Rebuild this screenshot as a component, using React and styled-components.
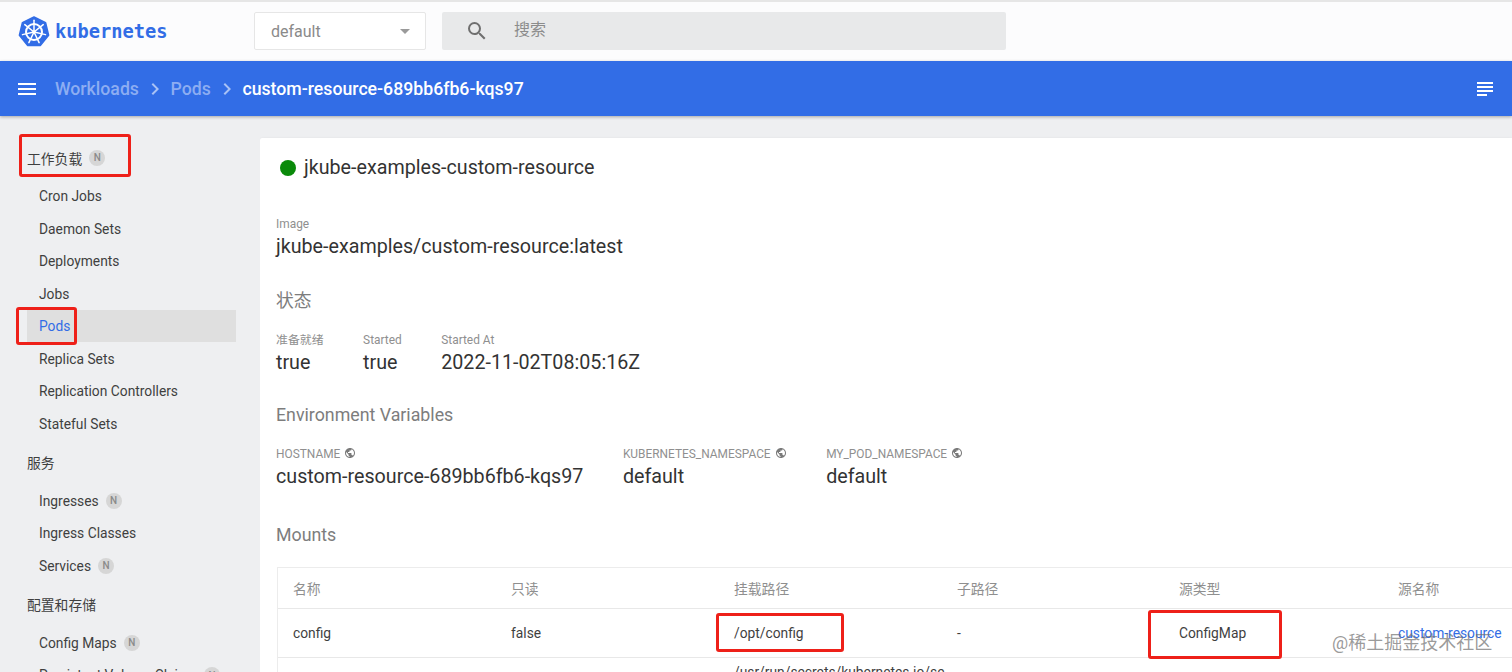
import React from "react";
import styled, { createGlobalStyle } from "styled-components";

const FONT = `Roboto, "Noto Sans CJK SC", sans-serif`;

const Global = createGlobalStyle`
  html, body { margin: 0; padding: 0; height: 100%; overflow: hidden; background: #eeeff1; }
  body { font-family: ${FONT}; color: #212121; }
  * { box-sizing: border-box; }
`;

const Page = styled.div`
  position: relative; width: 1512px; height: 672px; overflow: hidden;
  display: flex; flex-direction: column;
`;
const TopBar = styled.header`
  height: 61px; flex: none; background: #fcfcfd; border-top: 2px solid #e6e6e6;
  display: flex; align-items: center; padding: 0 0 0 18px;
`;
const Logo = styled.div`
  width: 236px; display: flex; align-items: center; gap: 5px; flex: none;
`;
const LogoText = styled.span`
  font-family: "DejaVu Sans Mono", monospace; font-weight: 700; font-size: 18.7px;
  color: #326de6; letter-spacing: 0;
`;
const NsSelect = styled.div`
  width: 172px; height: 38px; background: #fff; border: 1px solid #e6e6e6; border-radius: 2px;
  display: flex; align-items: center; justify-content: space-between; padding: 2px 15px 0 16px;
  font-size: 16px; color: #8a8a8a; margin-top: -2px;
`;
const Caret = styled.span`
  width: 0; height: 0; border-left: 5px solid transparent; border-right: 5px solid transparent;
  border-top: 5px solid #9a9a9a;
`;
const Search = styled.div`
  width: 564px; height: 38px; margin-left: 16px; margin-top: -2px; background: #e8e9ea; border-radius: 2px;
  display: flex; align-items: center; padding: 0 0 0 23px; gap: 25px;
  font-size: 16px; color: #8c8c8c;
`;
const SearchText = styled.span`
  line-height: 24px; margin-top: -2px;
`;
const BlueBar = styled.div`
  height: 55px; flex: none; background: #326de6; box-shadow: 0 1px 3px rgba(0,0,0,.3);
  display: flex; align-items: center; padding: 0 15px 0 15px; position: relative; z-index: 2;
`;
const Crumbs = styled.nav`
  display: flex; align-items: center; margin-left: 16px; flex: 1;
  font-size: 17.7px; font-weight: 500;
`;
const Crumb = styled.span`
  color: ${(p) => (p.$current ? "#fff" : "#8dadf2")};
`;
const Sep = styled.svg`
  width: 24px; height: 24px; margin: 0 3.8px; fill: #a9c2f5;
`;
const Body = styled.div`
  flex: 1; display: flex; min-height: 0;
`;
const Sidebar = styled.aside`
  width: 260px; flex: none; padding-top: 19.25px; overflow: hidden; font-size: 13.8px;
`;
const GroupTitle = styled.div`
  height: 44.5px; padding-left: 27px; display: flex; align-items: center;
  color: #3f3f3f;
`;
const Item = styled.div`
  height: 32.5px; margin: 0 24px 0 27px; padding-left: 12px; display: flex; align-items: center;
  color: ${(p) => (p.$active ? "#326de6" : "#3f3f3f")};
  background: ${(p) => (p.$active ? "#dfdfdf" : "transparent")};
  white-space: nowrap;
`;
const Badge = styled.span`
  width: 16px; height: 16px; border-radius: 50%; background: #d6d6d6; color: #8a8a8a;
  font-size: 10px; font-weight: 500; display: inline-flex; align-items: center; justify-content: center;
  margin-left: 7px; flex: none;
`;
const Main = styled.main`
  flex: 1; min-width: 0; padding-top: 22px; overflow: hidden;
`;
const Card = styled.section`
  height: 100%; background: #fff; border-radius: 2px 0 0 0; padding: 0 0 0 16px;
  box-shadow: 0 1px 3px rgba(0,0,0,.14); overflow: hidden;
`;
const TitleRow = styled.div`
  height: 78px; padding: 17px 0 0 4px; display: flex; align-items: flex-start; gap: 8px;
  font-size: 19.7px; line-height: 26px; color: #333;
`;
const Dot = styled.span`
  width: 16px; height: 16px; border-radius: 50%; background: #0a8a0a; margin-top: 5px; flex: none;
`;
const Label = styled.div`
  font-size: 11.9px; line-height: 16px; color: #8f8f8f; display: flex; align-items: center; gap: 4px;
`;
const Value = styled.div`
  font-size: 19.7px; line-height: 24px; color: #333; margin-top: 3px; white-space: nowrap;
`;
const SectionTitle = styled.h2`
  margin: ${(p) => p.$top}px 0 0; font-size: 17.8px; line-height: 24px; font-weight: 400; color: #7d7d7d;
`;
const Fields = styled.div`
  display: flex; gap: 39.5px; margin-top: 19px;
`;
const Globe = styled.svg`
  width: 12px; height: 12px; fill: #7a7a7a; margin-top: -2px;
`;
const Table = styled.div`
  margin: 20px 0 0 1px; width: 1300px; border: 1px solid #ececec; border-right: none; border-bottom: none;
`;
const Row = styled.div`
  display: grid; grid-template-columns: 218px 223px 223px 222px 219px 195px;
  height: ${(p) => p.$h}px; border-bottom: 1px solid #e8e8e8;
  align-items: ${(p) => (p.$top ? "flex-start" : "center")};
`;
const Cell = styled.div`
  padding-left: 15px; font-size: 13.8px; white-space: nowrap;
  color: ${(p) => (p.$head ? "#8f8f8f" : p.$link ? "#326de6" : "#3f3f3f")};
  padding-top: ${(p) => (p.$pad ? "6px" : "0")};
`;
const Annotation = styled.div`
  position: absolute; left: ${(p) => p.$x}px; top: ${(p) => p.$y}px;
  width: ${(p) => p.$w}px; height: ${(p) => p.$h}px;
  border: 3px solid #ee2019; border-radius: 3px; z-index: 5;
`;
const Watermark = styled.div`
  position: absolute; left: 1332px; top: 632px; font-size: 18px; line-height: 22px;
  color: rgba(110,110,110,.7); z-index: 6; white-space: nowrap;
`;

const Menu = () => (
  <svg width="24" height="24" viewBox="0 0 24 24" fill="#fff">
    <path d="M3 18h18v-2H3v2zm0-5h18v-2H3v2zm0-7v2h18V6H3z" />
  </svg>
);
const Notes = () => (
  <svg width="24" height="24" viewBox="0 0 24 24" fill="#fff">
    <path d="M14 17H4v2h10v-2zm6-8H4v2h16V9zM4 15h16v-2H4v2zM4 5v2h16V5H4z" />
  </svg>
);
const Chevron = () => (
  <Sep viewBox="0 0 24 24">
    <path d="M10 6L8.59 7.41 13.17 12l-4.58 4.59L10 18l6-6z" />
  </Sep>
);
const SearchIcon = () => (
  <svg width="24" height="24" viewBox="0 0 24 24" fill="#6f6f6f">
    <path d="M15.5 14h-.79l-.28-.27A6.47 6.47 0 0 0 16 9.5 6.5 6.5 0 1 0 9.5 16c1.61 0 3.09-.59 4.23-1.57l.27.28v.79l5 4.99L20.49 19l-4.99-5zm-6 0C7.01 14 5 11.99 5 9.5S7.01 5 9.5 5 14 7.01 14 9.5 11.99 14 9.5 14z" />
  </svg>
);
const PublicIcon = () => (
  <Globe viewBox="0 0 24 24">
    <path d="M12 2C6.48 2 2 6.48 2 12s4.48 10 10 10 10-4.48 10-10S17.52 2 12 2zm-1 17.93c-3.95-.49-7-3.85-7-7.93 0-.62.08-1.21.21-1.79L9 15v1c0 1.1.9 2 2 2v1.93zm6.9-2.54c-.26-.81-1-1.39-1.9-1.39h-1v-3c0-.55-.45-1-1-1H8v-2h2c.55 0 1-.45 1-1V7h2c1.1 0 2-.9 2-2v-.41c2.93 1.19 5 4.06 5 7.41 0 2.08-.8 3.97-2.1 5.39z" />
  </Globe>
);
const K8sLogo = () => {
  const spokes = [0, 1, 2, 3, 4, 5, 6].map((i) => (i * 360) / 7);
  return (
    <svg width="32" height="32" viewBox="0 0 32 32">
      <path d="M16 1 L27.6 6.6 L30.6 19.2 L22.5 29.4 L9.5 29.4 L1.4 19.2 L4.4 6.6 Z" fill="#326de6" stroke="#326de6" strokeWidth="1.5" strokeLinejoin="round" />
      <circle cx="16" cy="16" r="8" fill="none" stroke="#fff" strokeWidth="2" />
      <circle cx="16" cy="16" r="1.8" fill="#fff" />
      {spokes.map((a) => (
        <line key={a} x1="16" y1="16" x2="16" y2="4.2" stroke="#fff" strokeWidth="1.5" strokeLinecap="round" transform={`rotate(${a} 16 16)`} />
      ))}
    </svg>
  );
};

const groups = [
  { title: "工作负载", badge: true, items: [
    ["Cron Jobs"], ["Daemon Sets"], ["Deployments"], ["Jobs"], ["Pods", false, true],
    ["Replica Sets"], ["Replication Controllers"], ["Stateful Sets"],
  ] },
  { title: "服务", items: [["Ingresses", true], ["Ingress Classes"], ["Services", true]] },
  { title: "配置和存储", items: [["Config Maps", true], ["Persistent Volume Claims", true]] },
];
const status = [["准备就绪", "true"], ["Started", "true"], ["Started At", "2022-11-02T08:05:16Z"]];
const env = [
  ["HOSTNAME", "custom-resource-689bb6fb6-kqs97"],
  ["KUBERNETES_NAMESPACE", "default"],
  ["MY_POD_NAMESPACE", "default"],
];
const heads = ["名称", "只读", "挂载路径", "子路径", "源类型", "源名称"];
const cells = ["config", "false", "/opt/config", "-", "ConfigMap"];
const notes = [
  [19, 134, 112, 43],
  [16, 307, 61, 38],
  [716, 613, 128, 39],
  [1148, 610, 134, 49],
];

export default function App() {
  return (
    <Page>
      <Global />
      <TopBar>
        <Logo>
          <K8sLogo />
          <LogoText>kubernetes</LogoText>
        </Logo>
        <NsSelect>
          default
          <Caret />
        </NsSelect>
        <Search>
          <SearchIcon />
          <SearchText>搜索</SearchText>
        </Search>
      </TopBar>
      <BlueBar>
        <Menu />
        <Crumbs>
          <Crumb>Workloads</Crumb>
          <Chevron />
          <Crumb>Pods</Crumb>
          <Chevron />
          <Crumb $current>custom-resource-689bb6fb6-kqs97</Crumb>
        </Crumbs>
        <Notes />
      </BlueBar>
      <Body>
        <Sidebar>
          {groups.map((g) => (
            <div key={g.title}>
              <GroupTitle>
                {g.title}
                {g.badge && <Badge>N</Badge>}
              </GroupTitle>
              {g.items.map(([name, badge, active]) => (
                <Item key={name} $active={active}>
                  {name}
                  {badge && <Badge>N</Badge>}
                </Item>
              ))}
            </div>
          ))}
        </Sidebar>
        <Main>
          <Card>
            <TitleRow>
              <Dot />
              jkube-examples-custom-resource
            </TitleRow>
            <Label>Image</Label>
            <Value>jkube-examples/custom-resource:latest</Value>
            <SectionTitle $top={30}>状态</SectionTitle>
            <Fields>
              {status.map(([l, v]) => (
                <div key={l}>
                  <Label>{l}</Label>
                  <Value>{v}</Value>
                </div>
              ))}
            </Fields>
            <SectionTitle $top={28}>Environment Variables</SectionTitle>
            <Fields>
              {env.map(([l, v]) => (
                <div key={l}>
                  <Label>
                    {l}
                    <PublicIcon />
                  </Label>
                  <Value>{v}</Value>
                </div>
              ))}
            </Fields>
            <SectionTitle $top={34}>Mounts</SectionTitle>
            <Table>
              <Row $h={41}>
                {heads.map((h) => (
                  <Cell key={h} $head>{h}</Cell>
                ))}
              </Row>
              <Row $h={49}>
                {cells.map((c) => (
                  <Cell key={c}>{c}</Cell>
                ))}
                <Cell $link>custom-resource</Cell>
              </Row>
              <Row $h={60} $top>
                <Cell />
                <Cell />
                <Cell $pad>/usr/run/secrets/kubernetes.io/se</Cell>
              </Row>
            </Table>
          </Card>
        </Main>
      </Body>
      {notes.map(([x, y, w, h]) => (
        <Annotation key={x} $x={x} $y={y} $w={w} $h={h} />
      ))}
      <Watermark>@稀土掘金技术社区</Watermark>
    </Page>
  );
}
